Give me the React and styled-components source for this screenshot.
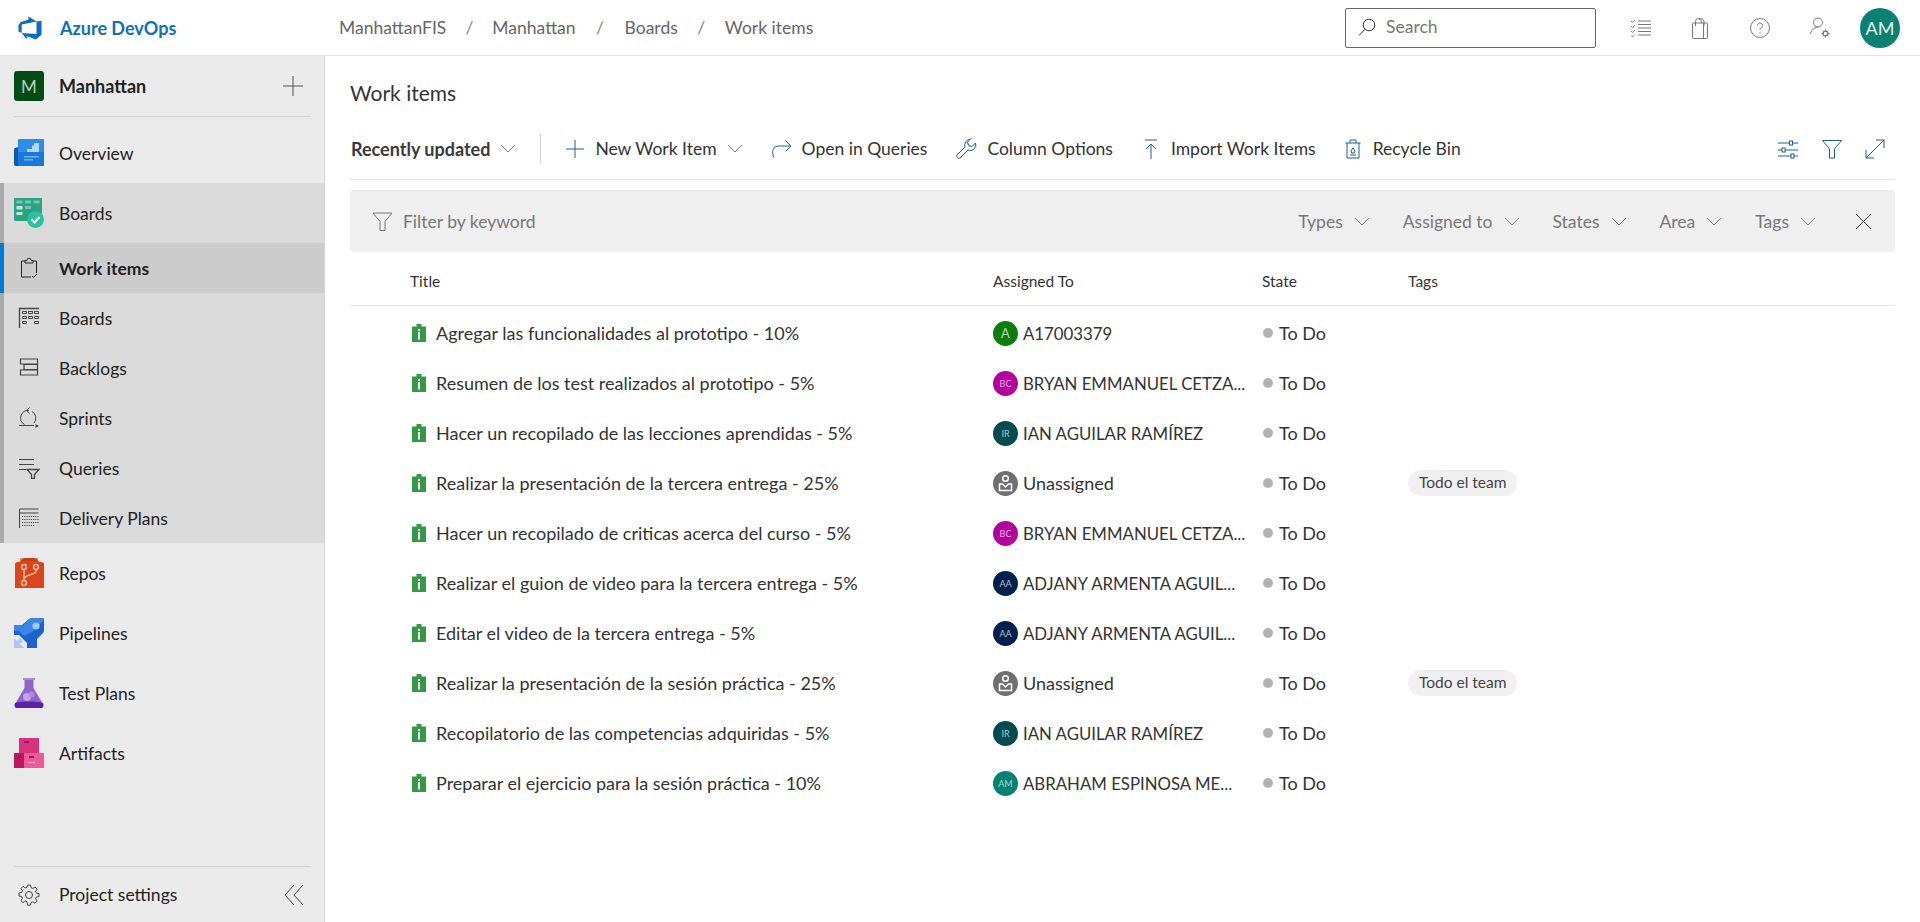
import React from 'react';
import styled, { createGlobalStyle } from 'styled-components';

const GlobalStyle = createGlobalStyle`
  html, body {
    margin: 0;
    height: 100%;
    overflow: hidden;
    background: #fff;
    font-family: Lato, 'Open Sans', 'Liberation Sans', sans-serif;
  }
`;

const Page = styled.div`
  display: flex;
  flex-direction: column;
  height: 922px;
  width: 1920px;
`;
const TopBar = styled.header`
  display: flex;
  align-items: center;
  flex: 0 0 56px;
  height: 56px;
  box-sizing: border-box;
  border-bottom: 1px solid #e4e4e4;
`;
const Brand = styled.div`
  display: flex;
  align-items: center;
  width: 339px;
  padding-left: 17px;
  box-sizing: border-box;
  gap: 17px;
  color: #106ebe;
  font-size: 18px;
  font-weight: 700;
`;
const Crumbs = styled.nav`
  display: flex;
  align-items: center;
  flex: 1;
  font-size: 17.5px;
  color: #666;
`;
const CrumbSep = styled.span`
  width: ${p => p.$w}px;
  text-align: center;
  color: #888;
`;
const SearchBox = styled.div`
  display: flex;
  align-items: center;
  gap: 9px;
  width: 251px;
  height: 40px;
  box-sizing: border-box;
  padding: 0 0 2px 11px;
  border: 1px solid #666;
  border-radius: 2px;
  color: #777;
  font-size: 17.5px;
`;
const TopIcons = styled.div`
  display: flex;
  align-items: center;
  margin-left: 34px;
  gap: 36px;
`;
const TopAvatar = styled.div`
  display: flex;
  align-items: center;
  justify-content: center;
  width: 40px;
  height: 40px;
  margin: 0 20px 0 28px;
  border-radius: 50%;
  background: #0a8272;
  color: #e6f3f0;
  font-size: 18px;
`;
const Body = styled.div`
  display: flex;
  flex: 1;
  min-height: 0;
`;
const Sidebar = styled.aside`
  display: flex;
  flex-direction: column;
  width: 325px;
  box-sizing: border-box;
  background: #eaeaea;
  border-right: 1px solid #d4d4d4;
  color: #222;
  font-size: 17.5px;
`;
const ProjectRow = styled.div`
  display: flex;
  align-items: center;
  height: 60px;
  margin: 0 13px 6px 14px;
  border-bottom: 1px solid #d2d2d2;
  font-size: 18px;
  font-weight: 700;
`;
const ProjectBadge = styled.div`
  display: flex;
  align-items: center;
  justify-content: center;
  width: 30px;
  height: 30px;
  margin-right: 15px;
  border-radius: 3px;
  background: #054b16;
  color: #b9cdbc;
  font-size: 17px;
  font-weight: 400;
`;
const PlusBox = styled.span`
  display: flex;
  margin-left: auto;
  margin-right: 8px;
`;
const NavRow = styled.div`
  display: flex;
  align-items: center;
  height: 60px;
  padding-left: 14px;
  gap: 15px;
`;
const IconSlot = styled.span`
  display: flex;
  width: 30px;
  height: 30px;
  align-items: center;
  justify-content: center;
  flex: none;
`;
const Group = styled.div`
  background: #dadada;
  border-left: 4px solid #a9a9a9;
`;
const GroupHead = styled(NavRow)`
  padding-left: 10px;
`;
const SubRow = styled.div`
  display: flex;
  align-items: center;
  height: 50px;
  margin-left: ${p => (p.$active ? '-4px' : '0')};
  padding-left: 10px;
  gap: 15px;
  font-weight: ${p => (p.$active ? 700 : 400)};
  background: ${p => (p.$active ? '#cccccc' : 'transparent')};
  border-left: ${p => (p.$active ? '4px solid #0078d4' : '0')};
`;
const SideFooter = styled.div`
  display: flex;
  align-items: center;
  height: 55px;
  margin: auto 13px 0 14px;
  border-top: 1px solid #d2d2d2;
  gap: 15px;
`;
const CollapseBox = styled.span`
  display: flex;
  margin-left: auto;
  margin-right: 7px;
`;
const Main = styled.main`
  flex: 1;
  min-width: 0;
  padding: 0 25px;
`;
const Title = styled.h1`
  display: flex;
  align-items: center;
  height: 62px;
  margin: 5px 0 0;
  font-size: 21px;
  font-weight: 400;
  color: #333;
`;
const Toolbar = styled.div`
  display: flex;
  align-items: center;
  height: 57px;
  padding-bottom: 5px;
  box-sizing: border-box;
  font-size: 17.5px;
  color: #333;
  border-bottom: 1px solid #e6e6e6;
`;
const SortLabel = styled.span`
  display: flex;
  align-items: center;
  gap: 10px;
  padding-left: 1px;
  font-size: 18px;
  font-weight: 700;
  color: #3a3a3a;
`;
const Divider = styled.span`
  width: 1px;
  height: 30px;
  margin: 0 24px;
  background: #d0d0d0;
`;
const Action = styled.span`
  display: flex;
  align-items: center;
  gap: 10px;
  margin-right: ${p => p.$gap ?? 28}px;
`;
const RightTools = styled.div`
  display: flex;
  align-items: center;
  gap: 22px;
  margin-left: auto;
  margin-right: 10px;
`;
const FilterBar = styled.div`
  display: flex;
  align-items: center;
  height: 62px;
  margin-top: 10px;
  padding: 0 23px 0 22px;
  border-radius: 4px;
  background: #efefef;
  color: #777;
  font-size: 17.5px;
`;
const Keyword = styled.span`
  display: flex;
  align-items: center;
  gap: 10px;
  flex: 1;
`;
const FilterDrop = styled.span`
  display: flex;
  align-items: center;
  gap: 11px;
  margin-right: ${p => p.$gap ?? 33}px;
`;
const Grid = styled.div`
  display: grid;
  grid-template-columns: 60px 583px 269px 146px 1fr;
  align-items: center;
`;
const HeadRow = styled(Grid)`
  height: 54px;
  padding-top: 4px;
  box-sizing: border-box;
  border-bottom: 1px solid #e6e6e6;
  font-size: 15.5px;
  color: #333;
`;
const Rows = styled.div`
  padding-top: 2px;
`;
const ItemRow = styled(Grid)`
  height: 50px;
  font-size: 18px;
  color: #333;
`;
const TitleCell = styled.span`
  display: flex;
  align-items: center;
  gap: 10px;
  padding-left: 2px;
`;
const AssigneeCell = styled.span`
  display: flex;
  align-items: center;
  gap: 5px;
`;
const Avatar = styled.span`
  display: flex;
  align-items: center;
  justify-content: center;
  flex: none;
  width: 25px;
  height: 25px;
  border-radius: 50%;
  background: ${p => p.$bg};
  color: rgba(255, 255, 255, 0.7);
  font-size: ${p => (p.$initials.length > 1 ? 9 : 13)}px;
`;
const Name = styled.span`
  white-space: nowrap;
  font-size: ${p => (p.$caps ? 16.8 : 18)}px;
`;
const StateCell = styled.span`
  display: flex;
  align-items: center;
  gap: 6px;
  padding-left: 1px;
`;
const Dot = styled.span`
  width: 10px;
  height: 10px;
  border-radius: 50%;
  background: #b2b2b2;
`;
const Pill = styled.span`
  display: inline-block;
  padding: 0 11px;
  height: 26px;
  line-height: 25px;
  border-radius: 13px;
  background: #f0f0f0;
  font-size: 15.5px;
  color: #444;
`;

const Line = ({ size = 20, color = '#333', sw = 1, view = 20, children }) => (
  <svg width={size} height={size} viewBox={`0 0 ${view} ${view}`} fill="none" stroke={color} strokeWidth={sw}>
    {children}
  </svg>
);

const Chevron = ({ color = '#777' }) => (
  <svg width="16" height="9" viewBox="0 0 16 9" fill="none" stroke={color}>
    <path d="M1 1l7 7 7-7" />
  </svg>
);

const Logo = () => (
  <svg width="26" height="26" viewBox="0 0 18 18" fill="#0f6cbd">
    <path d="M17 4v9.740l-4 3.280-6.200-2.260V17l-3.510-4.590 10.230.8V4.440zm-3.410.49L7.850 1v2.290L2.580 4.840 1 6.870v4.610l2.260 1V6.570z" />
  </svg>
);

const OverviewIcon = () => (
  <svg width="30" height="30" viewBox="0 0 30 30">
    <path d="M0 10.500L4 9v19H2a2 2 0 0 1-2-2z" fill="#0e57ad" />
    <rect x="4" y="1" width="26" height="27" rx="1" fill="#2d8de8" />
    <path d="M4 14h26v13a1 1 0 0 1-1 1H4z" fill="#1a78dc" />
    <path d="M13 14v-3h5V7.500h2V5h5v9z" fill="#b4d9f8" />
    <path d="M10 18h15v1.500H10zM10 21h9v1.500h-9z" fill="#6fb2ef" />
  </svg>
);
const BoardsIcon = () => (
  <svg width="30" height="30" viewBox="0 0 30 30">
    <rect x="0" y="0" width="28" height="23" rx="1" fill="#2ba283" />
    <path d="M2.500 2.500h6v3h-6zM11 2.500h6v3h-6zM19.500 2.500h6v3h-6z" fill="#6dc7b0" />
    <path d="M2.500 8h6v3.500h-6zM2.500 14h6v3h-6z" fill="#bfe8dc" />
    <path d="M11 8h6v3h-6z" fill="#6dc7b0" />
    <circle cx="21.500" cy="21.500" r="8.500" fill="#2cc0a0" />
    <path d="M17.500 21.500l3 3 5-5.500" fill="none" stroke="#fff" strokeWidth="2" />
  </svg>
);
const ReposIcon = () => (
  <svg width="30" height="30" viewBox="0 0 30 30">
    <path d="M1 6c0-1 1-2 3-2l2-.5L8 1.500C9 .5 10 0 11 0h9c1 0 2 .5 3 1.500l2 2 2 .5c2 0 3 1 3 2v24H1z" fill="#d9481c" />
    <path d="M6 0h18v3H6z" fill="#b83510" opacity=".5" />
    <g fill="none" stroke="#f9bda6" strokeWidth="1.500">
      <circle cx="10" cy="9" r="2.400" />
      <circle cx="22" cy="9" r="2.400" />
      <circle cx="10" cy="25" r="2.400" />
      <path d="M10 11.500v11M22 11.500v2c0 3-12 3-12 8" />
    </g>
  </svg>
);
const PipelinesIcon = () => (
  <svg width="30" height="30" viewBox="0 0 30 30">
    <path d="M30 0v12c0 2-1 3-2 4l-5 5v9h-10v-5l-8-8H0V7l8 0 6-5c2-1.500 3-2 5-2z" fill="#1d62cf" />
    <path d="M0 7h9l-4 6H0zM30 0H19c-2 0-3 .5-5 2L5 13l5 5 8-4 12-12z" fill="#3a86e8" />
    <circle cx="22" cy="8" r="3.600" fill="#9cccf6" />
    <path d="M0 30V20l3 3 3-3 3 3-3 3 4 4z" fill="#a9c7f3" />
  </svg>
);
const TestIcon = () => (
  <svg width="30" height="30" viewBox="0 0 30 30">
    <path d="M9 0h12v2h-1.500v8l9.500 16c1 2 0 4-2 4H3c-2 0-3-2-2-4l9.500-16V2H9z" fill="#9063cd" />
    <path d="M9 0h12v2H9z" fill="#a98ad6" />
    <path d="M1 25c5-2 23-2 28 0 1 3 0 5-2 5H3c-2 0-3-2-2-5z" fill="#5a22a8" />
    <circle cx="13" cy="19" r="4" fill="#c4a3e8" />
    <circle cx="17.500" cy="16.500" r="3" fill="#b08ade" />
  </svg>
);
const ArtifactsIcon = () => (
  <svg width="30" height="30" viewBox="0 0 30 30">
    <rect x="5" y="0" width="20" height="17" fill="#d6337c" />
    <rect x="0" y="15" width="11" height="15" fill="#bd1661" />
    <rect x="10" y="15" width="20" height="15" fill="#ec5a9b" />
    <path d="M10 3h5v2h-5zM15 18h5v2h-5zM4 18h4v2H4z" fill="#a01358" />
    <path d="M14 24h7v1h-7z" fill="#f7a8cb" />
  </svg>
);

const WorkItemsIcon = () => (
  <Line size={22} color="#222" view={22}>
    <path d="M7 4H3.500v16H13M15 4h3.500v12" />
    <path d="M7 6V3.500h1.800a2.200 2.200 0 0 1 4.400 0H15V6z" />
    <path d="M14 19l1.500 1.500 3.500-3.500" />
  </Line>
);
const SubBoardsIcon = () => (
  <svg width="22" height="22" viewBox="0 0 22 22" fill="none" stroke="#444">
    <path d="M1.500 21V1.500H21" strokeWidth="1.300" />
    <path d="M4.500 4.500h4v2h-4zM10.500 4.500h4v2h-4zM16.500 4.500h4v2h-4zM4.500 9.500h4v2h-4zM10.500 9.500h4v2h-4zM16.500 9.500h4v2h-4zM4.500 14.500h4v2h-4zM16.500 14.500h4v2h-4z" />
  </svg>
);
const BacklogsIcon = () => (
  <svg width="22" height="22" viewBox="0 0 22 22" fill="none" stroke="#444" strokeWidth="1.200">
    <path d="M2.500 2h17v5h-17zM6 7.500h13.500v5H6zM2.500 13h17v5h-17z" />
  </svg>
);
const SprintsIcon = () => (
  <svg width="22" height="22" viewBox="0 0 22 22" fill="none" stroke="#444">
    <path d="M1 18.500h15M6.500 17.500A7.500 7.500 0 0 1 11 3.500M11.500 .5L8.500 3.500l3 3M14 4.500a7.500 7.500 0 0 1 2 11.500" />
    <path d="M17.500 17l3.500 2-3.500 2z" fill="#444" stroke="none" />
  </svg>
);
const QueriesIcon = () => (
  <svg width="22" height="22" viewBox="0 0 22 22" fill="none" stroke="#444">
    <path d="M1 2.500h15M1 7.500h15M1 12.500h7" />
    <path d="M9 12.500h12l-4.500 5v4h-3v-4z" strokeWidth="1.300" />
  </svg>
);
const PlansIcon = () => (
  <svg width="22" height="22" viewBox="0 0 22 22" fill="none" stroke="#444">
    <path d="M1.500 21V2h19M1.500 6h19" />
    <path d="M4 9.500h17M4 12.500h17M4 15.500h17M4 18.500h13" strokeDasharray="1.200 1" />
  </svg>
);

const navIcons = { Repos: ReposIcon, Pipelines: PipelinesIcon, 'Test Plans': TestIcon, Artifacts: ArtifactsIcon };
const subItems = [
  ['Boards', SubBoardsIcon],
  ['Backlogs', BacklogsIcon],
  ['Sprints', SprintsIcon],
  ['Queries', QueriesIcon],
  ['Delivery Plans', PlansIcon],
];

const TaskIcon = () => (
  <svg width="14" height="18" viewBox="0 0 14 18">
    <path d="M0 2.500h4.500V0h5v2.500H14V18H0z" fill="#339947" />
    <rect x="6" y="5" width="2" height="2" fill="#fff" />
    <rect x="6" y="8" width="2" height="7.500" fill="#fff" />
  </svg>
);
const UnassignedAvatar = () => (
  <svg width="25" height="25" viewBox="0 0 25 25">
    <circle cx="12.500" cy="12.500" r="12.500" fill="#6f6f6f" />
    <circle cx="12.500" cy="7.500" r="2.800" fill="none" stroke="#fff" strokeWidth="1.500" />
    <path d="M6.500 13v6.500h12V13h-3l-3 3-3-3z" fill="none" stroke="#fff" strokeWidth="1.500" />
  </svg>
);

const people = {
  a: { name: 'A17003379', initials: 'A', bg: '#0b7d0b', caps: true },
  bryan: { name: 'BRYAN EMMANUEL CETZA...', initials: 'BC', bg: '#b4009e', caps: true },
  ian: { name: 'IAN AGUILAR RAMÍREZ', initials: 'IR', bg: '#004b50', caps: true },
  adjany: { name: 'ADJANY ARMENTA AGUIL...', initials: 'AA', bg: '#002050', caps: true },
  abraham: { name: 'ABRAHAM ESPINOSA ME...', initials: 'AM', bg: '#008272', caps: true },
  none: { name: 'Unassigned' },
};

const items = [
  ['Agregar las funcionalidades al prototipo - 10%', 'a'],
  ['Resumen de los test realizados al prototipo - 5%', 'bryan'],
  ['Hacer un recopilado de las lecciones aprendidas - 5%', 'ian'],
  ['Realizar la presentación de la tercera entrega - 25%', 'none', 'Todo el team'],
  ['Hacer un recopilado de criticas acerca del curso - 5%', 'bryan'],
  ['Realizar el guion de video para la tercera entrega - 5%', 'adjany'],
  ['Editar el video de la tercera entrega - 5%', 'adjany'],
  ['Realizar la presentación de la sesión práctica - 25%', 'none', 'Todo el team'],
  ['Recopilatorio de las competencias adquiridas - 5%', 'ian'],
  ['Preparar el ejercicio para la sesión práctica - 10%', 'abraham'],
];

const App = () => {
  const blue = '#1b5e96';
  return (
    <Page>
      <GlobalStyle />
      <TopBar>
        <Brand>
          <Logo />
          Azure DevOps
        </Brand>
        <Crumbs>
          ManhattanFIS
          <CrumbSep $w={46}>/</CrumbSep>
          Manhattan
          <CrumbSep $w={49}>/</CrumbSep>
          Boards
          <CrumbSep $w={47}>/</CrumbSep>
          Work items
        </Crumbs>
        <SearchBox>
          <Line size={20} color="#333" view={20}>
            <circle cx="12" cy="8" r="5.800" />
            <path d="M8 12.300L2 18.500" />
          </Line>
          Search
        </SearchBox>
        <TopIcons>
          <Line size={22} color="#777" view={22}>
            <path d="M8 4h13M8 7.500h13M8 11h13M8 14.500h13M8 18h13" />
            <path d="M1 4l1.500 1.500L5 3M1 9l1.500 1.500L5 8M1 14l1.500 1.500L5 13M1 18.500l1.500 1.500L5 17.500" strokeWidth=".9" />
          </Line>
          <Line size={24} color="#777" view={24}>
            <rect x="4.500" y="7" width="15" height="15.500" rx="1" />
            <path d="M15.500 7v15.500M7.500 10V5.500a3 3 0 0 1 6 0V7M11 3.500a3 3 0 0 1 5 2V10" />
          </Line>
          <Line size={24} color="#777" view={24}>
            <circle cx="12" cy="12" r="9.500" />
            <path d="M9.500 9.500a2.500 2.500 0 1 1 4 2c-1 .8-1.500 1.300-1.500 2.500M12 16v1" />
          </Line>
          <Line size={24} color="#777" view={24}>
            <circle cx="10" cy="6.500" r="4.500" />
            <path d="M2.500 18c.5-3.500 3-6.500 7.500-6.700" />
            <circle cx="17.500" cy="17.500" r="2.400" strokeWidth="1.300" />
            <path d="M17.500 13.500v1.600M17.500 20v1.600M13.500 17.500h1.600M20 17.500h1.600M14.700 14.700l1 1M19.300 19.300l1 1M14.700 20.300l1-1M19.300 15.700l1-1" />
          </Line>
        </TopIcons>
        <TopAvatar>AM</TopAvatar>
      </TopBar>
      <Body>
        <Sidebar>
          <ProjectRow>
            <ProjectBadge>M</ProjectBadge>
            Manhattan
            <PlusBox>
              <Line size={20} color="#555" view={20}>
                <path d="M10 0v20M0 10h20" />
              </Line>
            </PlusBox>
          </ProjectRow>
          <NavRow>
            <IconSlot><OverviewIcon /></IconSlot>
            Overview
          </NavRow>
          <Group>
            <GroupHead>
              <IconSlot><BoardsIcon /></IconSlot>
              Boards
            </GroupHead>
            <SubRow $active>
              <IconSlot><WorkItemsIcon /></IconSlot>
              Work items
            </SubRow>
            {subItems.map(([label, Icon]) => (
              <SubRow key={label}>
                <IconSlot><Icon /></IconSlot>
                {label}
              </SubRow>
            ))}
          </Group>
          {['Repos', 'Pipelines', 'Test Plans', 'Artifacts'].map(label => {
            const Icon = navIcons[label];
            return (
              <NavRow key={label}>
                <IconSlot><Icon /></IconSlot>
                {label}
              </NavRow>
            );
          })}
          <SideFooter>
            <IconSlot>
              <Line size={22} color="#444" view={22}>
                <circle cx="11" cy="11" r="3.500" />
                <path d="M9.500 1.500h3l.5 2.600 1.800.8 2.200-1.500 2.100 2.100-1.500 2.200.8 1.800 2.600.5v3l-2.600.5-.8 1.800 1.500 2.200-2.100 2.100-2.200-1.500-1.800.8-.5 2.600h-3L9 18.300l-1.800-.8L5 19l-2.100-2.100 1.500-2.200-.8-1.800-2.600-.5v-3l2.600-.5.8-1.800L2.900 4.900 5 2.800l2.200 1.500L9 3.500z" transform="translate(0 -.4)" />
              </Line>
            </IconSlot>
            Project settings
            <CollapseBox>
              <svg width="20" height="22" viewBox="0 0 20 22" fill="none" stroke="#444">
                <path d="M10 1L1 11l9 10M19 1l-9 10 9 10" />
              </svg>
            </CollapseBox>
          </SideFooter>
        </Sidebar>
        <Main>
          <Title>Work items</Title>
          <Toolbar>
            <SortLabel>Recently updated <Chevron /></SortLabel>
            <Divider />
            <Action>
              <Line size={20} color={blue} view={20}>
                <path d="M10 1v18M1 10h18" />
              </Line>
              New Work Item <Chevron />
            </Action>
            <Action>
              <Line size={21} color={blue} view={21}>
                <path d="M3 19.500C0 14 2 8 8 8h12M14.500 2.500L20 8l-5.500 5.500" />
              </Line>
              Open in Queries
            </Action>
            <Action>
              <Line size={22} color={blue} view={22}>
                <path d="M15 1.500a5.500 5.500 0 0 0-5 7.500L2 17a2.200 2.200 0 0 0 3 3l8-8a5.500 5.500 0 0 0 7.500-7l-3.500 3.500-3.500-1-1-3.500 3.500-3.500z" />
              </Line>
              Column Options
            </Action>
            <Action $gap={27}>
              <Line size={20} color={blue} view={20}>
                <path d="M4 1h12M10 20V5M5 10l5-5 5 5" />
              </Line>
              Import Work Items
            </Action>
            <Action $gap={0}>
              <Line size={20} color={blue} view={20}>
                <path d="M2.500 4h15M4 4v15h12V4M7 4V1h6v3" />
                <path d="M8 12l2-3 2 3-1 2H8.500zM7 16h6" />
              </Line>
              Recycle Bin
            </Action>
            <RightTools>
              <Line size={22} color={blue} view={22}>
                <path d="M1 5h20M1 12h20M1 18h20" />
                <rect x="12.500" y="3" width="3" height="4" fill="#fff" />
                <rect x="5" y="10" width="3" height="4" fill="#fff" />
                <rect x="14" y="16" width="3" height="4" fill="#fff" />
              </Line>
              <Line size={22} color={blue} view={22}>
                <path d="M1.500 2.500h19l-7 8.500v9h-5v-9z" />
              </Line>
              <Line size={20} color={blue} view={20}>
                <path d="M1 19L19 1M11 1h8v8M1 11v8h8" />
              </Line>
            </RightTools>
          </Toolbar>
          <FilterBar>
            <Keyword>
              <Line size={21} color="#777" view={21}>
                <path d="M1 2h19l-7 8.500v9H8v-9z" />
              </Line>
              Filter by keyword
            </Keyword>
            {['Types', 'Assigned to', 'States', 'Area'].map(label => (
              <FilterDrop key={label}>{label} <Chevron /></FilterDrop>
            ))}
            <FilterDrop $gap={39}>Tags <Chevron /></FilterDrop>
            <Line size={17} color="#333" view={17}>
              <path d="M1 1l15 15M16 1L1 16" />
            </Line>
          </FilterBar>
          <HeadRow>
            <span />
            <span>Title</span>
            <span>Assigned To</span>
            <span>State</span>
            <span>Tags</span>
          </HeadRow>
          <Rows>
            {items.map(([title, who, tag], i) => {
              const person = people[who];
              return (
                <ItemRow key={i}>
                  <span />
                  <TitleCell><TaskIcon />{title}</TitleCell>
                  <AssigneeCell>
                    {who === 'none' ? <UnassignedAvatar /> : <Avatar $bg={person.bg} $initials={person.initials}>{person.initials}</Avatar>}
                    <Name $caps={person.caps}>{person.name}</Name>
                  </AssigneeCell>
                  <StateCell><Dot />To Do</StateCell>
                  <span>{tag && <Pill>{tag}</Pill>}</span>
                </ItemRow>
              );
            })}
          </Rows>
        </Main>
      </Body>
    </Page>
  );
};

export default App;
